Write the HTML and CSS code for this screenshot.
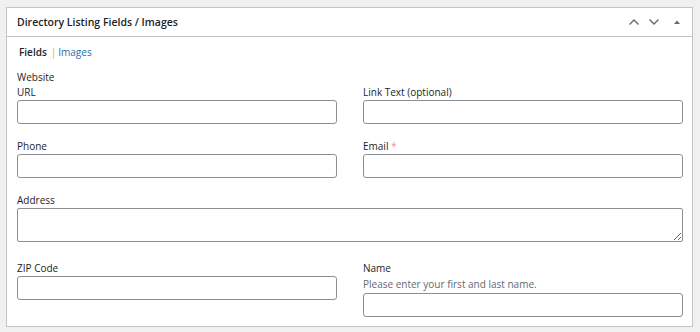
FILE: index.html
```html
<!DOCTYPE html>
<html lang="en">
<head>
    <meta charset="UTF-8">
    <title>Directory Listing Fields / Images</title>
    <link rel="stylesheet" href="styles.css">
</head>
<body>
    <div class="postbox">
        <div class="postbox-header">
            <h2>Directory Listing Fields / Images</h2>
            <div class="handle-actions">
                <!-- move up -->
                <svg class="handle-icon" width="12" height="8" viewBox="0 0 12 8"><path d="M1.5 6.5 L6 2 L10.5 6.5" fill="none" stroke="#646970" stroke-width="1.4"/></svg>
                <!-- move down -->
                <svg class="handle-icon" width="12" height="8" viewBox="0 0 12 8"><path d="M1.5 1.5 L6 6 L10.5 1.5" fill="none" stroke="#646970" stroke-width="1.4"/></svg>
                <!-- toggle -->
                <svg class="toggle-icon" width="8" height="6" viewBox="0 0 8 6"><path d="M1 5 L4 1.5 L7 5 Z" fill="#646970"/></svg>
            </div>
        </div>

        <div class="inside">
            <div class="tabs"><span class="tab-current">Fields</span><span class="tab-sep">|</span><a href="#" class="tab-link">Images</a></div>

            <div class="field-group">Website</div>
            <div class="row">
                <div class="field">
                    <label for="url">URL</label>
                    <input type="text" id="url">
                </div>
                <div class="field">
                    <label for="link-text">Link Text (optional)</label>
                    <input type="text" id="link-text">
                </div>
            </div>

            <div class="row">
                <div class="field">
                    <label for="phone">Phone</label>
                    <input type="text" id="phone">
                </div>
                <div class="field">
                    <label for="email">Email <span class="required">*</span></label>
                    <input type="text" id="email">
                </div>
            </div>

            <div class="row row-textarea">
                <div class="field field-wide">
                    <label for="address">Address</label>
                    <textarea id="address" rows="2"></textarea>
                </div>
            </div>

            <div class="row row-last">
                <div class="field">
                    <label for="zip">ZIP Code</label>
                    <input type="text" id="zip">
                </div>
                <div class="field">
                    <label for="name">Name</label>
                    <p class="description">Please enter your first and last name.</p>
                    <input type="text" id="name">
                </div>
            </div>
        </div>
    </div>
</body>
</html>
```

FILE: styles.css
```css
* {
    box-sizing: border-box;
}

body {
    margin: 0;
    padding: 7px 7px 0 6px;
    background-color: #f0f0f1;
    font-family: "Open Sans", "Noto Sans", sans-serif;
    font-size: 10px;
    color: #1d2327;
}

.postbox {
    width: 687px;
    background: #fff;
    border: 1px solid #c3c4c7;
}

.postbox-header {
    height: 29px;
    display: flex;
    align-items: center;
    justify-content: space-between;
    border-bottom: 1px solid #c3c4c7;
    padding: 0 10px;
}

.postbox-header h2 {
    margin: 0;
    font-size: 10.5px;
    font-weight: 600;
    color: #1d2327;
}

.handle-actions {
    display: flex;
    align-items: center;
    gap: 8px;
    margin-right: 1px;
}

.toggle-icon {
    margin-left: 5px;
}

.inside {
    padding: 8px 9px 9px 10px;
}

.tabs {
    line-height: 14px;
    margin-left: 2px;
    margin-bottom: 11px;
}

.tab-current {
    font-weight: 600;
}

.tab-sep {
    color: #b9a58c;
    margin: 0 2px 0 4px;
}

.tab-link {
    color: #2271b1;
    text-decoration: none;
}

.field-group {
    line-height: 15px;
}

.row {
    display: flex;
    gap: 26px;
    margin-bottom: 15px;
}

.row-textarea {
    margin-bottom: 19px;
}

.row-last {
    margin-bottom: 0;
}

.field {
    width: 320px;
    display: flex;
    flex-direction: column;
}

.field-wide {
    width: 100%;
}

label {
    line-height: 15px;
}

.required {
    color: #e29a9b;
}

.description {
    margin: 0 0 1px;
    line-height: 16px;
    color: #646970;
}

input,
textarea {
    margin: 0;
    height: 24px;
    border: 1px solid #8c8f94;
    border-radius: 3px;
    font-family: inherit;
    font-size: 10px;
    background: #fff;
}

textarea {
    height: 34px;
    border-radius: 2px;
    resize: vertical;
}
```
